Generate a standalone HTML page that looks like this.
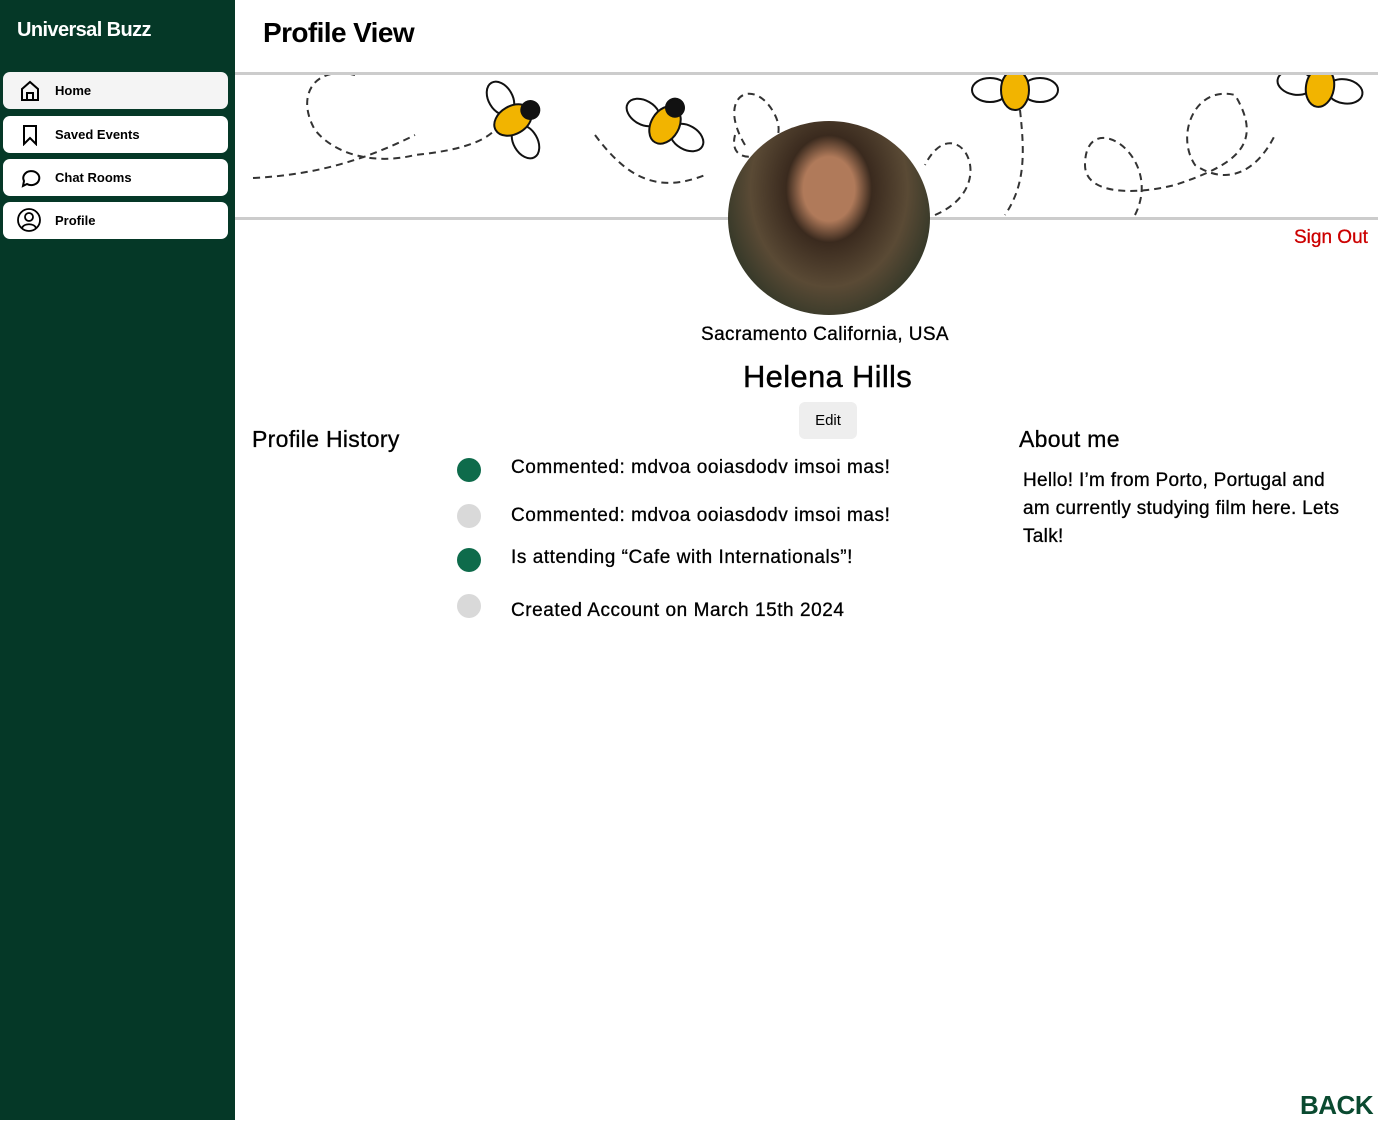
<!DOCTYPE html>
<html><head><style>
body{margin:0;width:1378px;height:1120px;position:relative;font-family:"Liberation Sans",sans-serif;background:#fff;overflow:hidden}
.side{position:absolute;left:0;top:0;width:235px;height:1120px;background:#053827}
.logo{position:absolute;left:17px;top:19px;color:#fff;font-weight:900;font-size:20px;letter-spacing:-0.6px}
.nav{position:absolute;left:3px;width:225px;height:37px;background:#fff;border-radius:7px;font-weight:900;font-size:13px}
.nav span{position:absolute;left:52px;top:11px}
.nav svg{position:absolute;left:16px;top:8px}
.t{position:absolute;color:#000}
.h{font-size:19px;letter-spacing:0.55px;-webkit-text-stroke:0.3px #000}
</style></head><body>
<div class="side">
<div class="logo">Universal Buzz</div>
<div class="nav" style="top:72px;background:#f4f4f4"><svg width="22" height="22" viewBox="0 0 22 22" fill="none" stroke="#000" stroke-width="2"><path d="M3 9L11 2 19 9V20H3Z"/><path d="M8 20V13H14V20"/></svg><span>Home</span></div>
<div class="nav" style="top:116px"><svg width="22" height="22" viewBox="0 0 22 22" fill="none" stroke="#000" stroke-width="2"><path d="M5 2H17V20L11 14 5 20Z"/></svg><span>Saved Events</span></div>
<div class="nav" style="top:159px"><svg width="22" height="22" viewBox="0 0 22 22" fill="none" stroke="#000" stroke-width="2"><path d="M4 19L5 14A8 7 0 1 1 8 17Z"/></svg><span>Chat Rooms</span></div>
<div class="nav" style="top:202px"><svg width="24" height="24" viewBox="0 0 24 24" fill="none" stroke="#000" stroke-width="1.8" style="left:14px;top:6px"><circle cx="12" cy="12" r="11"/><circle cx="12" cy="9" r="4"/><path d="M5 20C7 15 17 15 19 20"/></svg><span>Profile</span></div>
</div>
<div class="t" style="left:263px;top:17px;font-size:28px;font-weight:900;letter-spacing:-0.6px">Profile View</div>
<div style="position:absolute;left:235px;top:72px;width:1143px;height:3px;background:#ccc"></div>
<div style="position:absolute;left:235px;top:217px;width:1143px;height:3px;background:#ccc"></div>
<svg style="position:absolute;left:235px;top:75px" width="1143" height="142">
<g fill="none" stroke="#333" stroke-width="2" stroke-dasharray="7 5">
<path d="M18 103C80 100 130 85 180 60M120 0C80-10 60 20 80 55 100 80 140 90 180 80 230 75 250 65 260 55"/>
<path d="M360 60C390 100 420 120 470 100M510 70C480 20 520 0 540 40 560 80 490 100 500 60M700 140C770 110 720 30 690 90"/>
<path d="M900 140C930 80 850 30 850 90 850 120 900 120 940 110 1000 90 1030 70 1000 20 960 10 940 60 960 90 990 110 1020 100 1040 60 1060 30 1070 20"/>
<path d="M785 35C790 80 790 110 770 140"/>
</g>
<g stroke="#111" stroke-width="2">
<g transform="translate(278,45) rotate(-30)"><ellipse cx="0" cy="-25" rx="12" ry="18" fill="#fff"/><ellipse cx="0" cy="25" rx="12" ry="18" fill="#fff"/><ellipse cx="0" cy="0" rx="20" ry="14" fill="#f2b400"/><circle cx="20" cy="0" r="9" fill="#111"/></g>
<g transform="translate(430,50) rotate(-60)"><ellipse cx="0" cy="-25" rx="12" ry="18" fill="#fff"/><ellipse cx="0" cy="25" rx="12" ry="18" fill="#fff"/><ellipse cx="0" cy="0" rx="20" ry="14" fill="#f2b400"/><circle cx="20" cy="0" r="9" fill="#111"/></g>
<g transform="translate(780,15) rotate(-90)"><ellipse cx="0" cy="-25" rx="12" ry="18" fill="#fff"/><ellipse cx="0" cy="25" rx="12" ry="18" fill="#fff"/><ellipse cx="0" cy="0" rx="20" ry="14" fill="#f2b400"/></g>
<g transform="translate(1085,12) rotate(-80)"><ellipse cx="0" cy="-25" rx="12" ry="18" fill="#fff"/><ellipse cx="0" cy="25" rx="12" ry="18" fill="#fff"/><ellipse cx="0" cy="0" rx="20" ry="14" fill="#f2b400"/></g>
</g>
</svg>
<div style="position:absolute;left:728px;top:121px;width:202px;height:194px;border-radius:50%;background:radial-gradient(ellipse at 50% 35%,#b07a5a 0 18%,#3a2a1e 30%,#5a4a35 55%,#2e3526 80%)"></div>
<div class="t" style="left:1294px;top:227px;color:#c00;font-size:19px;-webkit-text-stroke:0.3px #c00">Sign Out</div>
<div class="t h" style="left:701px;top:324px;letter-spacing:0.4px">Sacramento California, USA</div>
<div class="t" style="left:743px;top:359px;font-size:31px;letter-spacing:0.3px;-webkit-text-stroke:0.4px #000">Helena Hills</div>
<div style="position:absolute;left:799px;top:402px;width:58px;height:37px;background:#eee;border-radius:6px;font-size:15px;text-align:center;line-height:37px">Edit</div>
<div class="t" style="left:252px;top:426px;font-size:23px;letter-spacing:0.3px;-webkit-text-stroke:0.3px #000">Profile History</div>
<div class="t" style="left:1019px;top:426px;font-size:23px;letter-spacing:0.3px;-webkit-text-stroke:0.3px #000">About me</div>
<div class="t h" style="left:1023px;top:467px;line-height:28px;width:322px;letter-spacing:0.3px">Hello! I’m from Porto, Portugal and am currently studying film here. Lets Talk!</div>
<div style="position:absolute;left:457px;top:458px;width:24px;height:24px;border-radius:50%;background:#0e6b4b"></div>
<div style="position:absolute;left:457px;top:504px;width:24px;height:24px;border-radius:50%;background:#d9d9d9"></div>
<div style="position:absolute;left:457px;top:548px;width:24px;height:24px;border-radius:50%;background:#0e6b4b"></div>
<div style="position:absolute;left:457px;top:594px;width:24px;height:24px;border-radius:50%;background:#d9d9d9"></div>
<div class="t h" style="left:511px;top:457px">Commented: mdvoa ooiasdodv imsoi mas!</div>
<div class="t h" style="left:511px;top:505px">Commented: mdvoa ooiasdodv imsoi mas!</div>
<div class="t h" style="left:511px;top:547px">Is attending “Cafe with Internationals”!</div>
<div class="t h" style="left:511px;top:600px">Created Account on March 15th 2024</div>
<div class="t" style="left:1300px;top:1090px;font-size:26px;font-weight:900;color:#0a4a30;letter-spacing:-0.5px">BACK</div>
</body></html>
